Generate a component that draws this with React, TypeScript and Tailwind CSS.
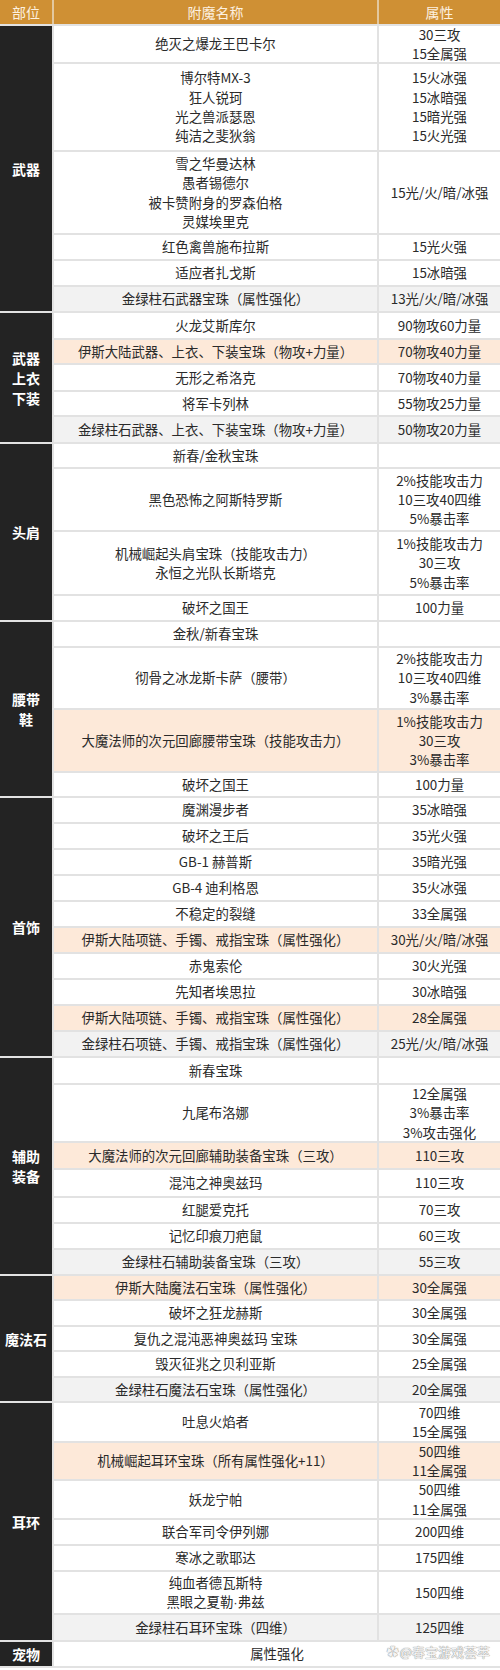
import React from 'react';

type Row = { n: string[]; a: string[]; h?: string; bg?: 'peach' | 'gray' };
type Group = { label: string[]; rows: Row[] };

const groups: Group[] = [
  {
    label: ['武器'],
    rows: [
      { n: ['绝灭之爆龙王巴卡尔'], a: ['30三攻', '15全属强'], h: 'h-[38px]' },
      {
        n: ['博尔特MX-3', '狂人锐珂', '光之兽派瑟恩', '纯洁之斐狄翁'],
        a: ['15火冰强', '15冰暗强', '15暗光强', '15火光强'],
        h: 'h-[88px]',
      },
      {
        n: ['雪之华曼达林', '愚者锡德尔', '被卡赞附身的罗森伯格', '灵媒埃里克'],
        a: ['15光/火/暗/冰强'],
        h: 'h-[83px]',
      },
      { n: ['红色禽兽施布拉斯'], a: ['15光火强'] },
      { n: ['适应者扎戈斯'], a: ['15冰暗强'] },
      { n: ['金绿柱石武器宝珠（属性强化）'], a: ['13光/火/暗/冰强'], bg: 'gray' },
    ],
  },
  {
    label: ['武器', '上衣', '下装'],
    rows: [
      { n: ['火龙艾斯库尔'], a: ['90物攻60力量'], h: 'h-[27px]' },
      { n: ['伊斯大陆武器、上衣、下装宝珠（物攻+力量）'], a: ['70物攻40力量'], h: 'h-[25px]', bg: 'peach' },
      { n: ['无形之希洛克'], a: ['70物攻40力量'], h: 'h-[27px]' },
      { n: ['将军卡列林'], a: ['55物攻25力量'], h: 'h-[25px]' },
      { n: ['金绿柱石武器、上衣、下装宝珠（物攻+力量）'], a: ['50物攻20力量'], h: 'h-[27px]', bg: 'gray' },
    ],
  },
  {
    label: ['头肩'],
    rows: [
      { n: ['新春/金秋宝珠'], a: [], h: 'h-[25px]' },
      { n: ['黑色恐怖之阿斯特罗斯'], a: ['2%技能攻击力', '10三攻40四维', '5%暴击率'], h: 'h-[63px]' },
      {
        n: ['机械崛起头肩宝珠（技能攻击力）', '永恒之光队长斯塔克'],
        a: ['1%技能攻击力', '30三攻', '5%暴击率'],
        h: 'h-[64px]',
      },
      { n: ['破坏之国王'], a: ['100力量'] },
    ],
  },
  {
    label: ['腰带', '鞋'],
    rows: [
      { n: ['金秋/新春宝珠'], a: [] },
      { n: ['彻骨之冰龙斯卡萨（腰带）'], a: ['2%技能攻击力', '10三攻40四维', '3%暴击率'], h: 'h-[62px]' },
      {
        n: ['大魔法师的次元回廊腰带宝珠（技能攻击力）'],
        a: ['1%技能攻击力', '30三攻', '3%暴击率'],
        h: 'h-[63px]',
        bg: 'peach',
      },
      { n: ['破坏之国王'], a: ['100力量'], h: 'h-[25px]' },
    ],
  },
  {
    label: ['首饰'],
    rows: [
      { n: ['魔渊漫步者'], a: ['35冰暗强'] },
      { n: ['破坏之王后'], a: ['35光火强'] },
      { n: ['GB-1 赫普斯'], a: ['35暗光强'] },
      { n: ['GB-4 迪利格恩'], a: ['35火冰强'] },
      { n: ['不稳定的裂缝'], a: ['33全属强'] },
      { n: ['伊斯大陆项链、手镯、戒指宝珠（属性强化）'], a: ['30光/火/暗/冰强'], bg: 'peach' },
      { n: ['赤鬼索伦'], a: ['30火光强'] },
      { n: ['先知者埃思拉'], a: ['30冰暗强'] },
      { n: ['伊斯大陆项链、手镯、戒指宝珠（属性强化）'], a: ['28全属强'], bg: 'peach' },
      { n: ['金绿柱石项链、手镯、戒指宝珠（属性强化）'], a: ['25光/火/暗/冰强'], bg: 'gray' },
    ],
  },
  {
    label: ['辅助', '装备'],
    rows: [
      { n: ['新春宝珠'], a: [], h: 'h-[27px]' },
      { n: ['九尾布洛娜'], a: ['12全属强', '3%暴击率', '3%攻击强化'], h: 'h-[58px]' },
      { n: ['大魔法师的次元回廊辅助装备宝珠（三攻）'], a: ['110三攻'], h: 'h-[27px]', bg: 'peach' },
      { n: ['混沌之神奥兹玛'], a: ['110三攻'], h: 'h-[28px]' },
      { n: ['红腿爱克托'], a: ['70三攻'] },
      { n: ['记忆印痕刀疤鼠'], a: ['60三攻'] },
      { n: ['金绿柱石辅助装备宝珠（三攻）'], a: ['55三攻'], bg: 'gray' },
    ],
  },
  {
    label: ['魔法石'],
    rows: [
      { n: ['伊斯大陆魔法石宝珠（属性强化）'], a: ['30全属强'], h: 'h-[25px]', bg: 'peach' },
      { n: ['破坏之狂龙赫斯'], a: ['30全属强'] },
      { n: ['复仇之混沌恶神奥兹玛 宝珠'], a: ['30全属强'], h: 'h-[25px]' },
      { n: ['毁灭征兆之贝利亚斯'], a: ['25全属强'] },
      { n: ['金绿柱石魔法石宝珠（属性强化）'], a: ['20全属强'], h: 'h-[25px]', bg: 'gray' },
    ],
  },
  {
    label: ['耳环'],
    rows: [
      { n: ['吐息火焰者'], a: ['70四维', '15全属强'], h: 'h-[40px]' },
      { n: ['机械崛起耳环宝珠（所有属性强化+11）'], a: ['50四维', '11全属强'], h: 'h-[38px]', bg: 'peach' },
      { n: ['妖龙宁帕'], a: ['50四维', '11全属强'], h: 'h-[39px]' },
      { n: ['联合军司令伊列娜'], a: ['200四维'] },
      { n: ['寒冰之歌耶达'], a: ['175四维'] },
      { n: ['纯血者德瓦斯特', '黑眼之夏勒·弗兹'], a: ['150四维'], h: 'h-[43px]' },
      { n: ['金绿柱石耳环宝珠（四维）'], a: ['125四维'], h: 'h-[27px]', bg: 'gray' },
    ],
  },
];

const bgClass = (bg?: 'peach' | 'gray') =>
  bg === 'peach' ? 'bg-[#fde9d9]' : bg === 'gray' ? 'bg-[#f2f2f2]' : 'bg-white';

const line = 'border-[#e2e2e2]';

function Text({ t }: { t: string }) {
  const parts = t.split('·');
  return (
    <div className="whitespace-nowrap">
      {parts.map((p, i) => (
        <React.Fragment key={i}>
          {i > 0 && <span className="font-['Liberation_Sans',sans-serif]">·</span>}
          {p}
        </React.Fragment>
      ))}
    </div>
  );
}

function Label({ lines }: { lines: string[] }) {
  return (
    <div
      className={`flex w-[54px] shrink-0 flex-col items-center justify-center border-r-2 border-b-2 ${line} bg-[#232323] text-[14px] font-bold leading-[20px] text-white`}
    >
      {lines.map((l) => (
        <div key={l}>{l}</div>
      ))}
    </div>
  );
}

export default function App() {
  return (
    <div className="relative w-[500px] bg-white font-['Noto_Sans_CJK_SC','Microsoft_YaHei',sans-serif] text-[13.4px] leading-[19.3px] text-[#2a2a2a]">
      <div className={`flex h-[26px] border-b-2 ${line} bg-[#cf9034] text-[14px] leading-[20px] text-[#fdf1e0]`}>
        <div className="flex w-[54px] shrink-0 items-center justify-center border-r-2 border-[#e3c89f]">部位</div>
        <div className="flex w-[325px] shrink-0 items-center justify-center border-r-2 border-[#e3c89f]">附魔名称</div>
        <div className="flex flex-1 items-center justify-center">属性</div>
      </div>
      {groups.map((g, gi) => (
        <div key={gi} className="flex">
          <Label lines={g.label} />
          <div className="flex flex-1 flex-col">
            {g.rows.map((r, ri) => (
              <div key={ri} className={`flex ${r.h ?? 'h-[26px]'} border-b-2 ${line} ${bgClass(r.bg)}`}>
                <div className={`flex w-[325px] shrink-0 flex-col items-center justify-center border-r-2 ${line} text-center`}>
                  {r.n.map((t, i) => (
                    <Text key={i} t={t} />
                  ))}
                </div>
                <div className="flex flex-1 flex-col items-center justify-center text-center">
                  {r.a.map((t, i) => (
                    <Text key={i} t={t} />
                  ))}
                </div>
              </div>
            ))}
          </div>
        </div>
      ))}
      <div className="flex h-[26px]">
        <div className={`flex w-[54px] shrink-0 items-center justify-center border-r-2 border-b-2 ${line} bg-[#232323] text-[14px] font-bold leading-[20px] text-white`}>
          宠物
        </div>
        <div className={`flex flex-1 items-center justify-center border-b-2 ${line} bg-white`}>属性强化</div>
      </div>
      <div className="absolute right-[10px] bottom-[8px] flex items-center gap-[1px] text-[13px] leading-[16px] text-[#f4f4f4] [text-shadow:0_0_1px_#8a8a8a,0_0_1px_#8a8a8a]">
        <span className="text-[12px]">✿</span>
        <span>@春宝游戏荟萃</span>
      </div>
    </div>
  );
}
